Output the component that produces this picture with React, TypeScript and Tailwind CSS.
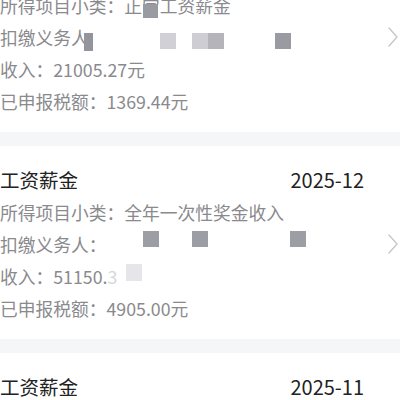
import type { CSSProperties } from "react";

type Mask = { left: number; top: number; w: number; h: number; color: string };

type Row = { text: string; tail?: string; masks?: Mask[] };

type Card = { title: string; date: string; rows: Row[] };

const cards: Card[] = [
  {
    title: "工资薪金",
    date: "2026-01",
    rows: [
      {
        text: "所得项目小类：正常工资薪金",
        masks: [{ left: 143, top: 15, w: 15, h: 14, color: "#9a9aa3" }],
      },
      {
        text: "扣缴义务人",
        masks: [
          { left: 84, top: 12, w: 9, h: 18, color: "#94949c" },
          { left: 160, top: 12, w: 16, h: 16, color: "#d0d0d6" },
          { left: 192, top: 12, w: 16, h: 16, color: "#cdcdd3" },
          { left: 208, top: 12, w: 16, h: 16, color: "#b4b4ba" },
          { left: 275, top: 12, w: 16, h: 16, color: "#9a9aa2" },
        ],
      },
      { text: "收入：21005.27元" },
      { text: "已申报税额：1369.44元" },
    ],
  },
  {
    title: "工资薪金",
    date: "2025-12",
    rows: [
      { text: "所得项目小类：全年一次性奖金收入" },
      {
        text: "扣缴义务人：",
        masks: [
          { left: 143, top: 3, w: 16, h: 16, color: "#9d9da5" },
          { left: 192, top: 3, w: 16, h: 16, color: "#9d9da5" },
          { left: 290, top: 3, w: 16, h: 16, color: "#9d9da5" },
        ],
      },
      {
        text: "收入：51150.",
        tail: "3",
        masks: [{ left: 126, top: 4, w: 16, h: 17, color: "#e6e6ea" }],
      },
      { text: "已申报税额：4905.00元" },
    ],
  },
  {
    title: "工资薪金",
    date: "2025-11",
    rows: [
      { text: "所得项目小类：正常工资薪金" },
      { text: "扣缴义务人：" },
      { text: "收入：21005.27元" },
      { text: "已申报税额：1369.44元" },
    ],
  },
];

function Chevron() {
  return (
    <svg width="10" height="20" viewBox="0 0 10 20" fill="none" aria-hidden="true">
      <polyline
        points="1,1 9,10 1,19"
        stroke="#c6c6ca"
        strokeWidth="1.3"
        strokeLinecap="round"
        strokeLinejoin="round"
      />
    </svg>
  );
}

function IncomeCard({ card }: { card: Card }) {
  return (
    <div className="flex items-center bg-white pt-[18px] pb-[15px] pr-[2px]">
      <div className="flex-1 pr-[24px]">
        <div className="flex h-[32px] items-center justify-between text-[#222222]">
          <span className="text-[19.5px]">{card.title}</span>
          <span className="text-[20px]">{card.date}</span>
        </div>
        {card.rows.map((row, i) => (
          <div
            key={i}
            className="relative flex h-[32px] items-center whitespace-nowrap text-[17.75px] text-[#8a8a8e]"
          >
            <span>
              {row.text}
              {row.tail && <span className="text-[#d6d6da]">{row.tail}</span>}
            </span>
            {row.masks?.map((m, j) => {
              const style: CSSProperties = {
                left: m.left,
                top: m.top,
                width: m.w,
                height: m.h,
                backgroundColor: m.color,
              };
              return <span key={j} className="absolute" style={style} />;
            })}
          </div>
        ))}
      </div>
      <Chevron />
    </div>
  );
}

export default function App() {
  return (
    <div className="h-[400px] w-[400px] overflow-hidden bg-white font-['Noto_Sans_CJK_SC',sans-serif]">
      <div className="-mt-[61px]">
        {cards.map((card, i) => (
          <div key={i}>
            {i > 0 && <div className="h-[14px] bg-[#f5f6f8]" />}
            <IncomeCard card={card} />
          </div>
        ))}
      </div>
    </div>
  );
}
